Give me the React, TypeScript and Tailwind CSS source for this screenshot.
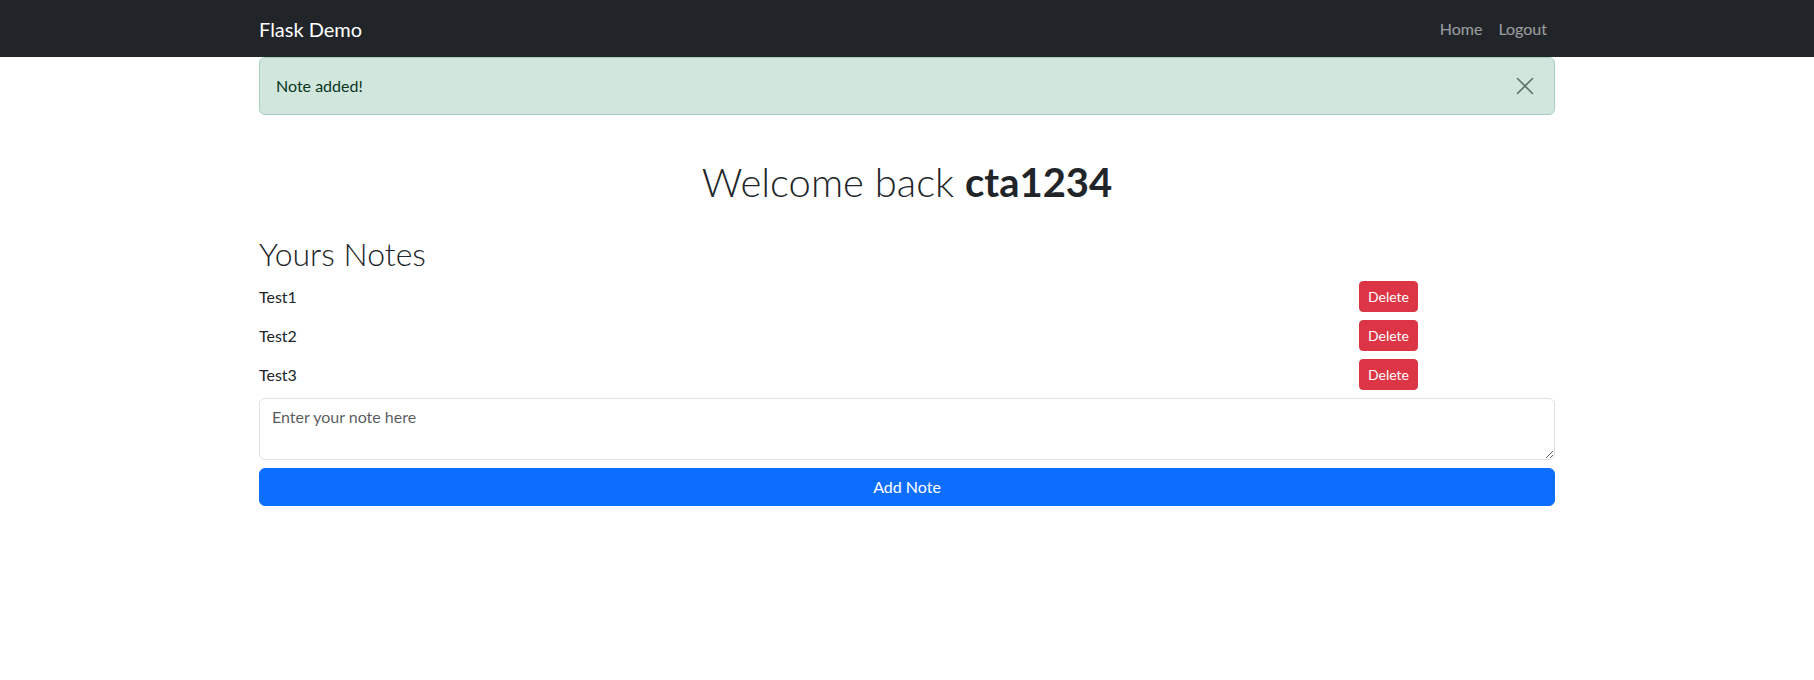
const notes = ["Test1", "Test2", "Test3"]

export default function App() {
  return (
    <div className="min-h-[680px] bg-white text-[#212529] font-['Lato','Noto_Sans',sans-serif]">
      <nav className="bg-[#212529] pt-[9px] pb-2">
        <div className="mx-auto flex h-10 max-w-[1320px] items-center justify-between px-3">
          <span className="text-xl text-white">Flask Demo</span>
          <div className="flex text-base text-white/55">
            <a className="px-2">Home</a>
            <a className="px-2">Logout</a>
          </div>
        </div>
      </nav>

      <div className="mx-auto max-w-[1320px] px-3">
        <div className="mb-4 flex items-center justify-between rounded-md border border-[#a3cfbb] bg-[#d1e7dd] py-4 pl-4 text-base leading-6 text-[#0a3622]">
          <span>Note added!</span>
          <button className="mr-[5px] flex h-6 w-12 items-center justify-center">
            <svg width="18" height="18" viewBox="0 0 18 18" fill="none" stroke="#5f7368" strokeWidth="1.6" strokeLinecap="round">
              <path d="M1.5 1.5 16.5 16.5M16.5 1.5 1.5 16.5" />
            </svg>
          </button>
        </div>

        <h1 className="mb-2 pt-[27px] text-center text-[40px] font-light leading-[48px]">
          Welcome back <span className="font-bold">cta1234</span>
        </h1>

        <h2 className="mb-2 mt-[29px] text-[32px] font-light leading-[38px]">Yours Notes</h2>

        <div className="flex flex-col gap-2">
          {notes.map((n) => (
            <div key={n} className="grid grid-cols-[1088px_1fr] items-center gap-x-3">
              <span className="text-base leading-6">{n}</span>
              <div>
                <button className="rounded border border-[#dc3545] bg-[#dc3545] px-2 py-1 text-sm leading-[21px] text-white">
                  Delete
                </button>
              </div>
            </div>
          ))}
        </div>

        <textarea
          rows={2}
          placeholder="Enter your note here"
          className="mt-2 block w-full rounded-md border border-[#dee2e6] px-3 py-1.5 text-base leading-6 placeholder:text-[#212529]/75"
        />
        <button className="mt-2 w-full rounded-md border border-[#0d6efd] bg-[#0d6efd] px-3 py-1.5 text-base leading-6 text-white">
          Add Note
        </button>
      </div>
    </div>
  )
}
